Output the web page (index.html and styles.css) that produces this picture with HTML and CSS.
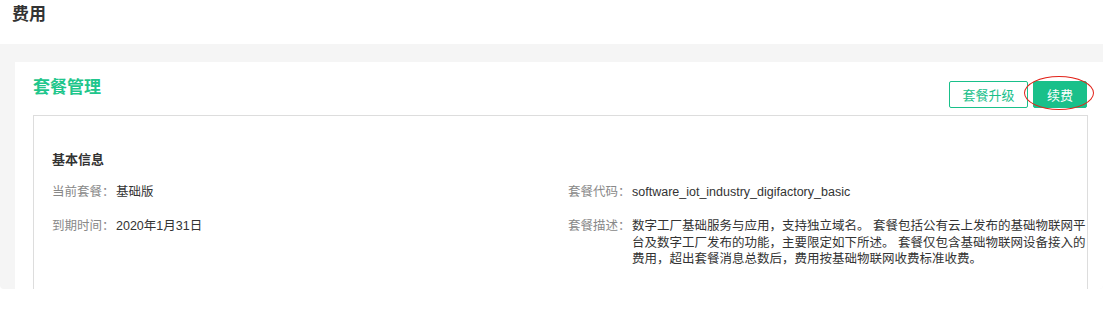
FILE: index.html
```html
<!DOCTYPE html>
<html>
<head>
  <meta name="viewport" content="width=device-width, initial-scale=1.0">
  <link rel="stylesheet" href="styles.css">
</head>
<body>
  <div class="page-title">费用</div>
  <div class="page-body">
    <div class="card">
      <div class="card-header">
        <div class="card-title">套餐管理</div>
        <div class="actions">
          <button class="btn btn-outline">套餐升级</button>
          <button class="btn btn-primary">续费<span class="mark"></span></button>
        </div>
      </div>
      <div class="info-box">
        <div class="info-title">基本信息</div>
        <div class="info-grid">
          <div class="info-item">
            <span class="label">当前套餐：</span>
            <span class="value">基础版</span>
          </div>
          <div class="info-item">
            <span class="label">套餐代码：</span>
            <span class="value">software_iot_industry_digifactory_basic</span>
          </div>
          <div class="info-item">
            <span class="label">到期时间：</span>
            <span class="value">2020年1月31日</span>
          </div>
          <div class="info-item">
            <span class="label">套餐描述：</span>
            <span class="value">数字工厂基础服务与应用，支持独立域名。 套餐包括公有云上发布的基础物联网平台及数字工厂发布的功能，主要限定如下所述。 套餐仅包含基础物联网设备接入的费用，超出套餐消息总数后，费用按基础物联网收费标准收费。</span>
          </div>
        </div>
      </div>
    </div>
  </div>
</body>
</html>
```

FILE: styles.css
```css
* {
  margin: 0;
  padding: 0;
  box-sizing: border-box;
}

body {
  margin: 0;
  width: 1103px;
  height: 313px;
  overflow: hidden;
  background: #fff;
  font-family: "Liberation Sans", "Noto Sans CJK SC", sans-serif;
  font-size: 12.5px;
  color: #333;
}

.page-title {
  height: 44px;
  line-height: 30px;
  padding-left: 12px;
  font-size: 17px;
  font-weight: bold;
  color: #333;
}

/* gray content area */
.page-body {
  height: 245px;
  background: #f5f5f5;
  border-radius: 0 0 4px 4px;
  overflow: hidden;
  padding: 18px 0 0 15px;
}

.card {
  height: 100%;
  background: #fff;
  padding: 14px 15px 0 18px;
}

.card-header {
  display: flex;
  justify-content: space-between;
  align-items: flex-start;
  margin-bottom: 7px;
}

.card-title {
  font-size: 17px;
  line-height: 24px;
  font-weight: bold;
  color: #1fc68c;
}

.actions {
  display: flex;
  gap: 5px;
  margin-top: 5px;
  margin-right: 1px;
}

.btn {
  height: 27px;
  font-family: "Noto Sans CJK SC", sans-serif;
  font-size: 13px;
  border-radius: 2px;
  border: 1px solid #19c08a;
  cursor: pointer;
}

.btn-outline {
  width: 79px;
  background: #fff;
  color: #19c08a;
}

.btn-primary {
  width: 54px;
  background: #19c08a;
  color: #fff;
  position: relative;
}

/* red annotation ring */
.btn-primary .mark {
  position: absolute;
  left: -10px;
  right: -8px;
  top: -6px;
  bottom: -3px;
  border: 1.5px solid #e2231a;
  border-radius: 50%;
}

.info-box {
  height: 200px;
  border: 1px solid #ddd;
  padding: 35px 0 0 18px;
  line-height: 16.5px;
}

.info-title {
  font-size: 13px;
  line-height: 17px;
  font-weight: bold;
  color: #333;
  margin-bottom: 16px;
}

.info-grid {
  display: grid;
  grid-template-columns: 516px 1fr;
  row-gap: 17.5px;
}

.info-item {
  display: flex;
}

.label {
  color: #888;
  white-space: nowrap;
  width: 64px;
  flex-shrink: 0;
}

.value {
  color: #333;
  flex: 1;
}
```
